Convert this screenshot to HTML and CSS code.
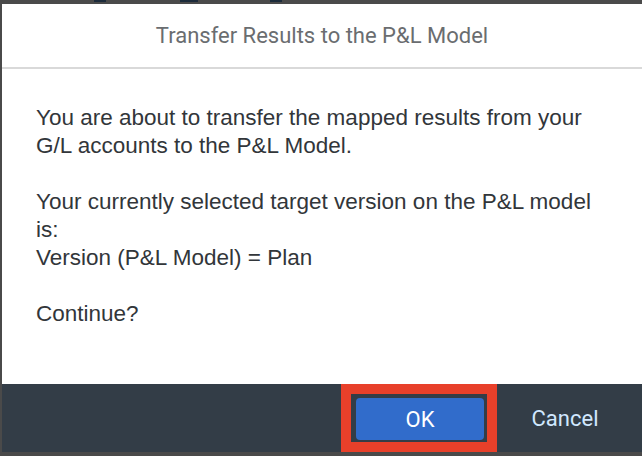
FILE: index.html
```html
<!DOCTYPE html>
<html>
<head>
<meta charset="utf-8">
<link rel="stylesheet" href="styles.css">
</head>
<body>
<div class="topbar">
  <span class="mark mark-a"></span>
  <span class="mark mark-b"></span>
  <span class="mark mark-c"></span>
</div>
<div class="stage">
  <div class="dialog">
    <header class="dialog-header">Transfer Results to the P&amp;L Model</header>
    <section class="dialog-body">
      <p>You are about to transfer the mapped results from your<br>G/L accounts to the P&amp;L Model.<br><br>Your currently selected target version on the P&amp;L model<br>is:<br>Version (P&amp;L Model) = Plan<br><br>Continue?</p>
    </section>
    <footer class="dialog-footer">
      <div class="highlight"><button class="btn btn-ok">OK</button></div>
      <button class="btn btn-cancel">Cancel</button>
    </footer>
  </div>
</div>
<div class="bottombar"></div>
</body>
</html>
```

FILE: styles.css
```css
html, body {
  margin: 0;
  padding: 0;
  background: #4a4a4a;
  width: 642px;
  height: 456px;
  overflow: hidden;
}

.topbar {
  height: 4px;
  display: flex;
  align-items: flex-start;
  padding-left: 94px;
  gap: 74px;
}

.mark {
  display: block;
  height: 2px;
  background: #1c2b3b;
}

.mark-a { width: 12px; }
.mark-b { width: 18px; }
.mark-c { width: 12px; margin-left: -2px; }

.stage {
  display: flex;
  padding-left: 2px;
}

.dialog {
  width: 640px;
  height: 448px;
  background: #ffffff;
  display: flex;
  flex-direction: column;
}

.dialog-header {
  height: 63px;
  border-bottom: 2px solid #d9d9d9;
  display: flex;
  align-items: center;
  justify-content: center;
  font-family: Roboto, "Liberation Sans", sans-serif;
  font-size: 22px;
  color: #6a6d70;
}

.dialog-body {
  flex: 1;
  padding: 35px 0 0 34px;
}

.dialog-body p {
  margin: 0;
  font-family: "Liberation Sans", Arial, sans-serif;
  font-size: 22.5px;
  line-height: 28px;
  color: #32363a;
}

.dialog-footer {
  height: 68px;
  background: #333d47;
  display: flex;
  justify-content: flex-end;
  align-items: stretch;
  padding-right: 13px;
  gap: 4px;
}

.highlight {
  border: 10px solid #e8402a;
  padding: 4px 3px 2px 5px;
  display: flex;
}

.btn {
  font-family: Roboto, "Liberation Sans", sans-serif;
  font-size: 22px;
  border: none;
  cursor: pointer;
}

.btn-ok {
  width: 128px;
  height: 42px;
  background: #316ccb;
  color: #ffffff;
  border-radius: 4px;
}

.btn-cancel {
  width: 128px;
  background: transparent;
  color: #d1e8ff;
}
```
